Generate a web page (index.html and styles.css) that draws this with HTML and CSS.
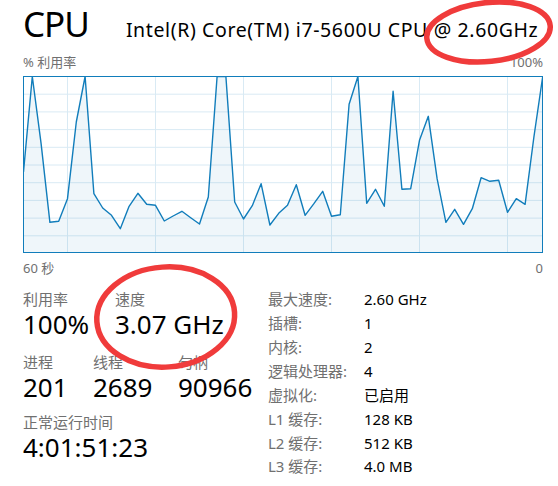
FILE: index.html
```html
<!DOCTYPE html>
<html lang="zh-CN">
<head>
<meta charset="utf-8">
<title>CPU</title>
<link rel="stylesheet" href="styles.css">
</head>
<body>
<div class="page">
  <header class="head">
    <h1 class="title">CPU</h1>
    <div class="model">Intel(R) Core(TM) i7-5600U CPU @ 2.60GHz</div>
  </header>

  <div class="axis axis-top"><span>% 利用率</span><span>100%</span></div>

  <div class="chart">
    <svg class="chart-svg" width="520" height="177" viewBox="0 0 520 177">
      <g class="grid">
        <line x1="0" y1="18.2" x2="520" y2="18.2"/>
        <line x1="0" y1="35.9" x2="520" y2="35.9"/>
        <line x1="0" y1="53.6" x2="520" y2="53.6"/>
        <line x1="0" y1="71.3" x2="520" y2="71.3"/>
        <line x1="0" y1="89" x2="520" y2="89"/>
        <line x1="0" y1="106.7" x2="520" y2="106.7"/>
        <line x1="0" y1="124.4" x2="520" y2="124.4"/>
        <line x1="0" y1="142.1" x2="520" y2="142.1"/>
        <line x1="0" y1="159.8" x2="520" y2="159.8"/>
        <line x1="44.5" y1="0" x2="44.5" y2="177"/>
        <line x1="132.5" y1="0" x2="132.5" y2="177"/>
        <line x1="220.5" y1="0" x2="220.5" y2="177"/>
        <line x1="308.5" y1="0" x2="308.5" y2="177"/>
        <line x1="396.5" y1="0" x2="396.5" y2="177"/>
        <line x1="484.5" y1="0" x2="484.5" y2="177"/>
      </g>
      <polygon class="area" points="0.5,177 0.5,96 9.3,0.5 18.1,67.7 26.9,146.3 35.7,145.3 44.5,122.7 53.3,46 62.1,0.5 70.9,117.7 79.7,132 88.5,139.3 97.3,152.7 106.1,130.3 114.9,117.3 123.7,128.3 132.5,129.3 141.3,145 150.1,140 158.9,135.3 167.7,141.7 176.5,148 185.3,121 194.1,0.5 202.9,0.5 211.7,126 220.5,143 229.3,129.7 238.1,107.7 246.9,149 255.7,137.3 264.5,129.3 273.3,108.7 282.1,139.3 290.9,127.7 299.7,115.3 308.5,140.3 317.3,138.7 326.1,28.3 334.9,0.5 343.7,127.3 352.5,113.3 361.3,130.3 370.1,15.3 378.9,113.3 387.7,112.7 396.5,64.3 405.3,40.3 414.1,102.7 422.9,146.3 431.7,133.3 440.5,148.3 449.3,132.7 458.1,101.7 466.9,105.3 475.7,104.3 484.5,136.3 493.3,122.7 502.1,128.3 510.9,61 519.7,0.5 519.7,177"/>
      <polyline class="line" points="0.5,96 9.3,0.5 18.1,67.7 26.9,146.3 35.7,145.3 44.5,122.7 53.3,46 62.1,0.5 70.9,117.7 79.7,132 88.5,139.3 97.3,152.7 106.1,130.3 114.9,117.3 123.7,128.3 132.5,129.3 141.3,145 150.1,140 158.9,135.3 167.7,141.7 176.5,148 185.3,121 194.1,0.5 202.9,0.5 211.7,126 220.5,143 229.3,129.7 238.1,107.7 246.9,149 255.7,137.3 264.5,129.3 273.3,108.7 282.1,139.3 290.9,127.7 299.7,115.3 308.5,140.3 317.3,138.7 326.1,28.3 334.9,0.5 343.7,127.3 352.5,113.3 361.3,130.3 370.1,15.3 378.9,113.3 387.7,112.7 396.5,64.3 405.3,40.3 414.1,102.7 422.9,146.3 431.7,133.3 440.5,148.3 449.3,132.7 458.1,101.7 466.9,105.3 475.7,104.3 484.5,136.3 493.3,122.7 502.1,128.3 510.9,61 519.7,0.5"/>
      <rect class="frame" x="0.5" y="0.5" width="519" height="176"/>
    </svg>
  </div>

  <div class="axis axis-bottom"><span>60 秒</span><span>0</span></div>

  <section class="details">
    <div class="stats">
      <div class="stat-row row-1">
        <div class="stat stat-util"><div class="label">利用率</div><div class="value">100%</div></div>
        <div class="stat"><div class="label">速度</div><div class="value">3.07 GHz</div></div>
      </div>
      <div class="stat-row row-2">
        <div class="stat stat-proc"><div class="label">进程</div><div class="value">201</div></div>
        <div class="stat stat-thread"><div class="label">线程</div><div class="value">2689</div></div>
        <div class="stat"><div class="label">句柄</div><div class="value">90966</div></div>
      </div>
      <div class="stat-row row-3">
        <div class="stat"><div class="label">正常运行时间</div><div class="value">4:01:51:23</div></div>
      </div>
    </div>

    <dl class="specs">
      <dt>最大速度:</dt><dd>2.60 GHz</dd>
      <dt>插槽:</dt><dd>1</dd>
      <dt>内核:</dt><dd>2</dd>
      <dt>逻辑处理器:</dt><dd>4</dd>
      <dt>虚拟化:</dt><dd>已启用</dd>
      <dt>L1 缓存:</dt><dd>128 KB</dd>
      <dt>L2 缓存:</dt><dd>512 KB</dd>
      <dt>L3 缓存:</dt><dd>4.0 MB</dd>
    </dl>
  </section>

  <svg class="marks" width="558" height="486" viewBox="0 0 558 486" aria-hidden="true">
    <ellipse cx="488.5" cy="32" rx="62" ry="29.5" transform="rotate(-6 488.5 32)"/>
    <ellipse cx="165.7" cy="317" rx="69" ry="50" transform="rotate(-4 165.7 317)"/>
  </svg>
</div>
</body>
</html>
```

FILE: styles.css
```css
* { box-sizing: border-box; }

html, body {
  margin: 0;
  padding: 0;
  background: #ffffff;
}

body {
  font-family: "Noto Sans", "Noto Sans CJK SC", sans-serif;
  color: #000000;
}

.page {
  position: relative;
  width: 558px;
  height: 486px;
  padding: 0 15px 0 23px;
  overflow: hidden;
}

/* header */
.head {
  display: flex;
  align-items: baseline;
  gap: 37px;
  padding-top: 2px;
  height: 55px;
}

.title {
  margin: 0;
  font-size: 35px;
  font-weight: 400;
  line-height: 44px;
  letter-spacing: -1px;
}

.model {
  font-size: 19.5px;
  line-height: 24px;
  letter-spacing: 0.62px;
  white-space: nowrap;
}

/* axis labels */
.axis {
  display: flex;
  justify-content: space-between;
  width: 520px;
  font-size: 13px;
  line-height: 16px;
  color: #707070;
}

.axis-top { margin-top: -1px; margin-bottom: 6px; }
.axis-bottom { margin-top: 6.7px; }

/* chart */
.chart {
  width: 520px;
  height: 177px;
}

.chart-svg { display: block; }

.grid line {
  stroke: #d9eaf4;
  stroke-width: 1;
}

.area {
  fill: #117dbb;
  fill-opacity: 0.065;
  stroke: none;
}

.line {
  fill: none;
  stroke: #117dbb;
  stroke-width: 1.4;
  stroke-linejoin: round;
}

.frame {
  fill: none;
  stroke: #117dbb;
  stroke-width: 1;
}

/* details */
.details {
  display: flex;
  margin-top: 12.5px;
}

.stats {
  width: 245px;
  padding-top: 1.2px;
}

.stat-row {
  display: flex;
}

.row-2 { margin-top: 12.5px; }
.row-3 { margin-top: 10.5px; }

.stat-util { width: 92px; }
.stat-proc { width: 70px; }
.stat-thread { width: 85px; }

.label {
  font-size: 15px;
  line-height: 20px;
  color: #707070;
  white-space: nowrap;
}

.value {
  font-size: 26px;
  line-height: 30px;
  white-space: nowrap;
}

.specs {
  display: grid;
  grid-template-columns: 96px auto;
  grid-auto-rows: 23.9px;
  margin: 0;
  font-size: 15px;
  line-height: 23.9px;
}

.specs dt {
  color: #707070;
  white-space: nowrap;
}

.specs dd {
  margin: 0;
  white-space: nowrap;
}

/* hand-drawn red annotations over the content */
.marks {
  position: absolute;
  left: 0;
  top: 0;
  pointer-events: none;
}

.marks ellipse {
  fill: none;
  stroke: #f03b3b;
  stroke-width: 5.5;
}
```
